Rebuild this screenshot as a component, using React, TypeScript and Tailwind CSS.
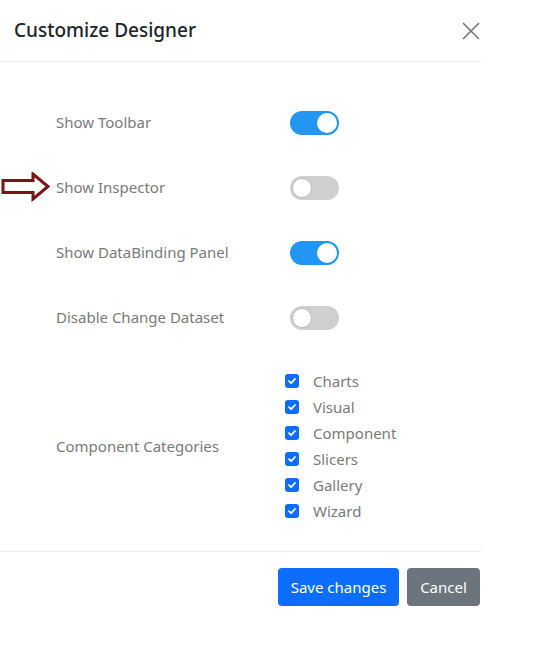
import React, { useState } from 'react';

type ToggleRow = { id: string; label: string; on: boolean };

const toggleRows: ToggleRow[] = [
  { id: 'toolbar', label: 'Show Toolbar', on: true },
  { id: 'inspector', label: 'Show Inspector', on: false },
  { id: 'databinding', label: 'Show DataBinding Panel', on: true },
  { id: 'dataset', label: 'Disable Change Dataset', on: false },
];

const categories = ['Charts', 'Visual', 'Component', 'Slicers', 'Gallery', 'Wizard'];

const Switch: React.FC<{ on: boolean; onClick: () => void }> = ({ on, onClick }) => (
  <button
    onClick={onClick}
    className={`flex h-[24px] w-[49px] items-center rounded-full px-[2px] ${
      on ? 'justify-end bg-[#2196f3]' : 'justify-start bg-[#cfcfcf]'
    }`}
  >
    <span
      className={`block h-[20px] w-[20px] rounded-full bg-white ${on ? '' : 'border border-[#bdbdbd]'}`}
    />
  </button>
);

const CheckBox: React.FC<{ checked: boolean }> = ({ checked }) => (
  <span
    className={`flex h-[14px] w-[14px] items-center justify-center rounded-[3px] ${
      checked ? 'bg-[#0d6efd]' : 'border border-[#adb5bd] bg-white'
    }`}
  >
    {checked && (
      <svg width="10" height="10" viewBox="0 0 10 10" fill="none">
        <path d="M2 5.2 L4.1 7.2 L8 3" stroke="white" strokeWidth="1.8" strokeLinecap="round" strokeLinejoin="round" />
      </svg>
    )}
  </span>
);

export default function App() {
  const [toggles, setToggles] = useState<Record<string, boolean>>(
    Object.fromEntries(toggleRows.map((r) => [r.id, r.on]))
  );

  return (
    <div
      className="relative h-[650px] w-[538px] bg-white"
      style={{ fontFamily: '"Noto Sans", "Open Sans", Arial, sans-serif' }}
    >
      <div className="w-[481px]">
        {/* Header */}
        <div className="flex h-[62px] items-center justify-between border-b border-[#e9ecef] pl-[14px] pr-[1px]">
          <h1 className="text-[19px] font-medium text-[#212529]">Customize Designer</h1>
          <svg width="18" height="18" viewBox="0 0 18 18" className="mt-[1px]">
            <path d="M1 1 L17 17 M17 1 L1 17" stroke="#737373" strokeWidth="1.6" />
          </svg>
        </div>

        {/* Body */}
        <div className="pb-[27px] pl-[56px] pt-[28px]">
          {toggleRows.map((r) => (
            <div key={r.id} className="flex h-[65px] items-center">
              <span className="w-[234px] text-[15px] text-[#7a7a7a]">{r.label}</span>
              <Switch
                on={toggles[r.id]}
                onClick={() => setToggles({ ...toggles, [r.id]: !toggles[r.id] })}
              />
            </div>
          ))}

          <div className="mt-[18px] flex items-center">
            <span className="w-[229px] text-[15px] text-[#7a7a7a]">Component Categories</span>
            <div className="flex flex-col">
              {categories.map((c) => (
                <label key={c} className="flex h-[26px] items-center gap-[14px]">
                  <CheckBox checked />
                  <span className="text-[15px] text-[#7a7a7a]">{c}</span>
                </label>
              ))}
            </div>
          </div>
        </div>

        {/* Footer */}
        <div className="flex justify-end gap-[8px] border-t border-[#e9ecef] pr-[1px] pt-[16px]">
          <button className="h-[38px] w-[121px] rounded-[4px] bg-[#0d6efd] text-[15px] text-white">
            Save changes
          </button>
          <button className="h-[38px] w-[73px] rounded-[4px] bg-[#6c757d] text-[15px] text-white">
            Cancel
          </button>
        </div>
      </div>

      {/* Annotation arrow pointing at Show Inspector */}
      <svg className="absolute left-[1px] top-[172px]" width="50" height="30" viewBox="0 0 50 30">
        <polygon
          points="2,8.5 32,8.5 32,2 47,14.5 32,27 32,20.5 2,20.5"
          fill="none"
          stroke="#7b1418"
          strokeWidth="3"
          strokeLinejoin="miter"
        />
      </svg>
    </div>
  );
}
